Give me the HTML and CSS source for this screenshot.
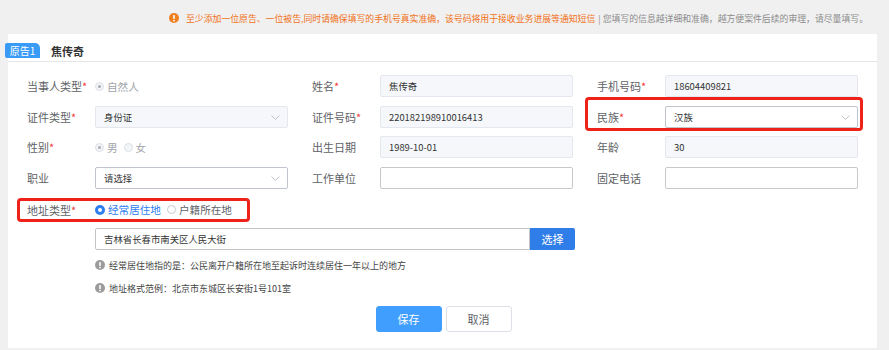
FILE: index.html
```html
<!DOCTYPE html>
<html lang="zh-CN">
<head>
    <meta charset="UTF-8">
    <meta name="viewport" content="width=device-width, initial-scale=1.0">
    <title>当事人信息</title>
    <link rel="stylesheet" href="styles.css">
</head>
<body>
    <!-- Top notice -->
    <div class="notice">
        <svg class="notice_icon" viewBox="0 0 10 10"><circle cx="5" cy="5" r="5" fill="#f0801f"/><rect x="4.2" y="2" width="1.6" height="4" rx="0.6" fill="#fff"/><circle cx="5" cy="7.6" r="0.9" fill="#fff"/></svg>
        <span class="notice_warn">至少添加一位原告、一位被告,同时请确保填写的手机号真实准确，该号码将用于接收业务进展等通知短信</span>
        <span class="notice_tip">| 您填写的信息越详细和准确，越方便案件后续的审理，请尽量填写。</span>
    </div>

    <section class="panel">
        <div class="party_head">
            <span class="party_tag">原告1</span>
            <span class="party_name">焦传奇</span>
        </div>

        <div class="form">
            <div class="form_row">
                <div class="field">
                    <label class="field_label">当事人类型<i>*</i></label>
                    <div class="radio_group">
                        <span class="radio is_disabled is_checked"></span><span class="radio_text is_muted">自然人</span>
                    </div>
                </div>
                <div class="field">
                    <label class="field_label">姓名<i>*</i></label>
                    <div class="input is_disabled">焦传奇</div>
                </div>
                <div class="field">
                    <label class="field_label">手机号码<i>*</i></label>
                    <div class="input is_disabled">18604409821</div>
                </div>
            </div>

            <div class="form_row">
                <div class="field">
                    <label class="field_label">证件类型<i>*</i></label>
                    <div class="input select is_disabled">身份证<svg class="chevron" viewBox="0 0 9 5"><polyline points="0.5,0.5 4.5,4.5 8.5,0.5" fill="none" stroke="#b8bcc4" stroke-width="0.9"/></svg></div>
                </div>
                <div class="field">
                    <label class="field_label">证件号码<i>*</i></label>
                    <div class="input is_disabled">220182198910016413</div>
                </div>
                <div class="field is_marked">
                    <label class="field_label">民族<i>*</i></label>
                    <div class="input select">汉族<svg class="chevron" viewBox="0 0 9 5"><polyline points="0.5,0.5 4.5,4.5 8.5,0.5" fill="none" stroke="#b8bcc4" stroke-width="0.9"/></svg></div>
                </div>
            </div>

            <div class="form_row">
                <div class="field">
                    <label class="field_label">性别<i>*</i></label>
                    <div class="radio_group">
                        <span class="radio is_disabled is_checked"></span><span class="radio_text is_muted">男</span>
                        <span class="radio is_disabled"></span><span class="radio_text is_muted">女</span>
                    </div>
                </div>
                <div class="field">
                    <label class="field_label">出生日期</label>
                    <div class="input is_disabled">1989-10-01</div>
                </div>
                <div class="field">
                    <label class="field_label">年龄</label>
                    <div class="input is_disabled">30</div>
                </div>
            </div>

            <div class="form_row">
                <div class="field">
                    <label class="field_label">职业</label>
                    <div class="input select">请选择<svg class="chevron" viewBox="0 0 9 5"><polyline points="0.5,0.5 4.5,4.5 8.5,0.5" fill="none" stroke="#b8bcc4" stroke-width="0.9"/></svg></div>
                </div>
                <div class="field">
                    <label class="field_label">工作单位</label>
                    <div class="input"></div>
                </div>
                <div class="field">
                    <label class="field_label">固定电话</label>
                    <div class="input"></div>
                </div>
            </div>

            <div class="form_row is_type">
                <div class="field is_marked is_inline">
                    <label class="field_label">地址类型<i>*</i></label>
                    <div class="radio_group">
                        <span class="radio is_active"></span><span class="radio_text is_blue">经常居住地</span>
                        <span class="radio"></span><span class="radio_text">户籍所在地</span>
                    </div>
                </div>
            </div>

            <div class="form_row is_indent">
                <div class="input address">吉林省长春市南关区人民大街</div>
                <button class="pick_btn">选择</button>
            </div>

            <div class="notes">
                <p class="note">
                    <svg class="note_icon" viewBox="0 0 10 10"><circle cx="5" cy="5" r="5" fill="#9b9b9b"/><rect x="4.2" y="2" width="1.6" height="4" rx="0.6" fill="#fff"/><circle cx="5" cy="7.6" r="0.9" fill="#fff"/></svg>
                    经常居住地指的是：公民离开户籍所在地至起诉时连续居住一年以上的地方
                </p>
                <p class="note">
                    <svg class="note_icon" viewBox="0 0 10 10"><circle cx="5" cy="5" r="5" fill="#9b9b9b"/><rect x="4.2" y="2" width="1.6" height="4" rx="0.6" fill="#fff"/><circle cx="5" cy="7.6" r="0.9" fill="#fff"/></svg>
                    地址格式范例：北京市东城区长安街1号101室
                </p>
            </div>
        </div>

        <div class="actions">
            <button class="btn btn_primary">保存</button>
            <button class="btn">取消</button>
        </div>
    </section>
</body>
</html>
```

FILE: styles.css
```css
body {
    margin: 0;
    background: #f0f0f0;
    font-family: "Noto Sans CJK SC", "Noto Sans", sans-serif;
    color: #606266;
    height: 350px;
    overflow: hidden;
}

/* Top notice line */
.notice {
    height: 34px;
    display: flex;
    align-items: center;
    justify-content: flex-end;
    padding: 2px 21px 0 0;
    box-sizing: border-box;
    font-size: 8.85px;
    white-space: nowrap;
}

.notice_icon {
    width: 10px;
    height: 10px;
    margin-right: 7px;
}

.notice_warn {
    color: #f07018;
}

.notice_tip {
    color: #8c8c8c;
    margin-left: 3px;
}

/* White panel */
.panel {
    background: #fff;
    margin: 0 12px 0 8px;
    height: 314px;
}

.party_head {
    height: 28px;
    box-sizing: border-box;
    padding-top: 9px;
    border-bottom: 1px solid #e6e6e6;
    display: flex;
    align-items: flex-start;
}

.party_tag {
    margin-left: -3px;
    width: 35px;
    height: 15px;
    line-height: 15px;
    text-align: center;
    background: #3a9bf6;
    color: #fff;
    font-size: 10px;
    border-radius: 2px 5px 0 2px;
}

.party_name {
    margin-left: 11px;
    line-height: 16px;
    font-size: 11px;
    font-weight: bold;
    color: #333;
}

/* Form grid */
.form {
    padding: 13px 0 0 19px;
    display: flex;
    flex-direction: column;
    gap: 8.6px;
}

.form_row {
    display: flex;
    gap: 24px;
    height: 22px;
}

.form_row.is_type {
    margin-top: 1.5px;
    margin-bottom: -1.5px;
}

.form_row.is_indent {
    padding-left: 68px;
    gap: 0;
}

.field {
    width: 261px;
    display: flex;
    align-items: center;
    position: relative;
}

.field.is_inline {
    width: auto;
}

/* red annotation frame */
.field.is_marked::after {
    content: '';
    position: absolute;
    top: -9px;
    bottom: -3px;
    left: -12px;
    right: -5px;
    border: 3px solid #ee2219;
    border-radius: 4px;
    pointer-events: none;
}

.field.is_inline::after {
    top: -1px;
    bottom: -1px;
    left: -10px;
    right: -12px;
}

.field_label {
    width: 68px;
    flex-shrink: 0;
    font-size: 11px;
    color: #606266;
}

.field_label i {
    font-style: normal;
    color: #f23a3a;
}

.input {
    width: 193px;
    height: 22px;
    box-sizing: border-box;
    border: 1px solid #c8c8c8;
    border-radius: 2px;
    padding-left: 8px;
    font-size: 9.4px;
    line-height: 20px;
    color: #333;
    position: relative;
    background: #fff;
}

.input.is_disabled {
    background: #f5f7fa;
    border-color: #e4e7ed;
}

.input.select {
    border-color: #c0c4cc;
}

.input.select.is_disabled {
    border-color: #e4e7ed;
}

.chevron {
    position: absolute;
    right: 7px;
    top: 8px;
    width: 9px;
    height: 5px;
}

.input.address {
    width: 435px;
    border-color: #c4c4c4;
    border-radius: 2px 0 0 2px;
}

.pick_btn {
    width: 45px;
    height: 22px;
    border: 0;
    border-radius: 0 2px 2px 0;
    background: #2f7de8;
    color: #fff;
    font-family: inherit;
    font-size: 11px;
    padding: 0;
}

/* Radios */
.radio_group {
    display: flex;
    align-items: center;
}

.radio {
    width: 9px;
    height: 9px;
    box-sizing: border-box;
    border: 1px solid #c6c9cf;
    border-radius: 50%;
    background: #fff;
    position: relative;
    margin-right: 3px;
}

.radio.is_disabled {
    background: #f2f4f7;
    border-color: #dcdfe6;
}

.radio.is_checked::after {
    content: '';
    position: absolute;
    width: 3px;
    height: 3px;
    left: 2px;
    top: 2px;
    border-radius: 50%;
    background: #a8abb2;
}

.radio.is_active {
    width: 10px;
    height: 10px;
    border: 0;
    background: #2e7ef0;
}

.radio.is_active::after {
    content: '';
    position: absolute;
    width: 4px;
    height: 4px;
    left: 3px;
    top: 3px;
    border-radius: 50%;
    background: #fff;
}

.radio_text {
    font-size: 10.6px;
    color: #606266;
    margin-right: 6px;
}

.radio_text.is_muted {
    color: #a0a3a8;
}

.radio_text.is_blue {
    color: #2e7ef0;
}

/* Notes under address */
.notes {
    padding-left: 68px;
    margin-top: -4.6px;
}

.note {
    margin: 0;
    height: 23px;
    display: flex;
    align-items: center;
    font-size: 9px;
    color: #444;
}

.note_icon {
    width: 10px;
    height: 10px;
    margin-right: 4px;
}

/* Bottom actions */
.actions {
    display: flex;
    justify-content: center;
    gap: 4px;
    margin-top: 6px;
    padding-left: 2px;
}

.btn {
    width: 66px;
    height: 26px;
    border: 1px solid #dcdfe6;
    border-radius: 3px;
    background: #fff;
    color: #606266;
    font-family: inherit;
    font-size: 11px;
    padding: 0;
}

.btn_primary {
    background: #409eff;
    border-color: #409eff;
    color: #fff;
}
```
